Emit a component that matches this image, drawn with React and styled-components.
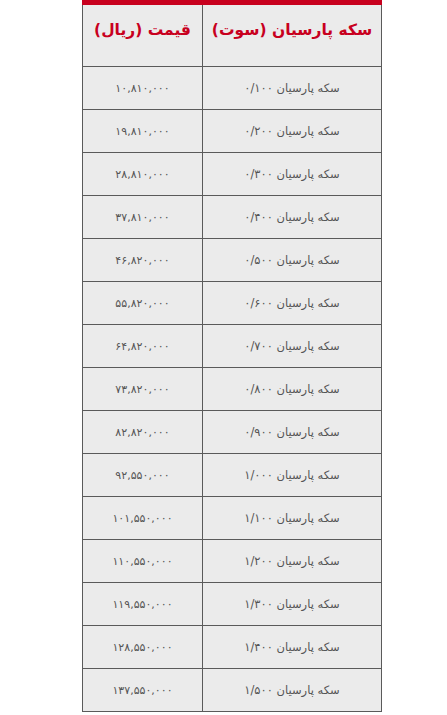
import React from "react";
import styled, { createGlobalStyle } from "styled-components";

const GlobalStyle = createGlobalStyle`
  body {
    margin: 0;
    background: #fff;
    font-family: "DejaVu Sans", "Noto Sans", sans-serif;
  }
`;

const Page = styled.div`
  padding-left: 82px;
`;

const Table = styled.table`
  direction: rtl;
  width: 300px;
  border-collapse: collapse;
  border-top: 5px solid #c8001e;
  background: #ebebeb;
`;

const Th = styled.th`
  height: 47px;
  width: ${(p) => p.w}px;
  border: 1px solid #5a5a5a;
  border-top: none;
  color: #c8001e;
  font-size: 15.5px;
  line-height: 22px;
  font-weight: bold;
  text-align: center;
  vertical-align: top;
  padding: 14px 0 0;
`;

const Td = styled.td`
  height: 42px;
  border: 1px solid #5a5a5a;
  color: #555;
  font-size: ${(p) => (p.price ? 11 : 11.5)}px;
  letter-spacing: ${(p) => (p.price ? "-0.4px" : "0")};
  text-align: center;
  padding: 0;
`;

const rows = [
  ["۰/۱۰۰", "۱۰,۸۱۰,۰۰۰"],
  ["۰/۲۰۰", "۱۹,۸۱۰,۰۰۰"],
  ["۰/۳۰۰", "۲۸,۸۱۰,۰۰۰"],
  ["۰/۴۰۰", "۳۷,۸۱۰,۰۰۰"],
  ["۰/۵۰۰", "۴۶,۸۲۰,۰۰۰"],
  ["۰/۶۰۰", "۵۵,۸۲۰,۰۰۰"],
  ["۰/۷۰۰", "۶۴,۸۲۰,۰۰۰"],
  ["۰/۸۰۰", "۷۳,۸۲۰,۰۰۰"],
  ["۰/۹۰۰", "۸۲,۸۲۰,۰۰۰"],
  ["۱/۰۰۰", "۹۲,۵۵۰,۰۰۰"],
  ["۱/۱۰۰", "۱۰۱,۵۵۰,۰۰۰"],
  ["۱/۲۰۰", "۱۱۰,۵۵۰,۰۰۰"],
  ["۱/۳۰۰", "۱۱۹,۵۵۰,۰۰۰"],
  ["۱/۴۰۰", "۱۲۸,۵۵۰,۰۰۰"],
  ["۱/۵۰۰", "۱۳۷,۵۵۰,۰۰۰"],
];

export default function App() {
  return (
    <Page>
      <GlobalStyle />
      <Table>
        <thead>
          <tr>
            <Th w={180}>سکه پارسیان (سوت)</Th>
            <Th w={120}>قیمت (ریال)</Th>
          </tr>
        </thead>
        <tbody>
          {rows.map(([w, price]) => (
            <tr key={w}>
              <Td>سکه پارسیان {w}</Td>
              <Td price>{price}</Td>
            </tr>
          ))}
        </tbody>
      </Table>
    </Page>
  );
}
